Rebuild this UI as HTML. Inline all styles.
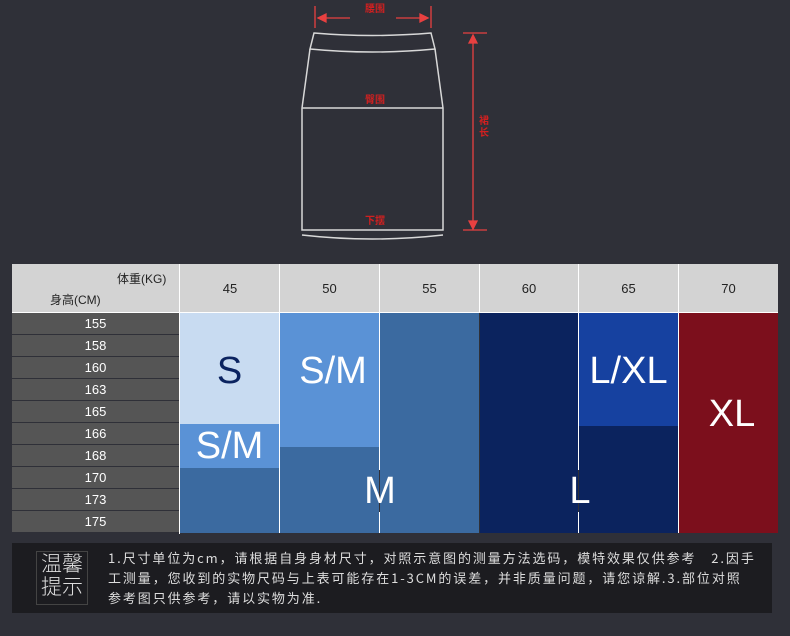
<!DOCTYPE html>
<html><head><meta charset="utf-8"><style>
body{margin:0;width:790px;height:636px;background:#2f3038;position:relative;overflow:hidden;font-family:"Liberation Sans","Noto Sans CJK SC",sans-serif}
.a{position:absolute}
.r{position:absolute;left:12px;width:167px;height:21px;background:#555;color:#fff;font-size:13px;text-align:center;line-height:21px}
.b{position:absolute;color:#fff;font-size:38px;text-align:center}
.t{position:absolute;left:108px;color:#ddd;font-size:13px;letter-spacing:1.9px;white-space:nowrap;font-family:'Noto Sans CJK SC',sans-serif;line-height:20px}
</style></head><body>
<svg class="a" style="left:0;top:0" width="790" height="260">
<g stroke="#d8d8d8" stroke-width="1.5" fill="none">
<path d="M314 33 Q372 38 431 33 L435 49 Q372 55 310 49 Z"/>
<path d="M310 49 L302 108 L302 230 L443 230 L443 108 L435 49"/>
<path d="M302 108 H443"/>
<path d="M302 235 Q372 243 443 235"/>
</g>
<g stroke="#e84040" stroke-width="1.3" fill="#e84040">
<path d="M315 6 V28 M431 6 V28 M318 18 H350 M396 18 H428"/>
<path d="M318 18 l8 -4 v8z M428 18 l-8 -4 v8z"/>
<path d="M463 33 H487 M463 230 H487 M473 36 V227"/>
<path d="M473 35 l-4 8 h8z M473 229 l-4 -8 h8z"/>
</g>
<g fill="#d02020" font-size="10" font-weight="bold" font-family="Noto Sans CJK SC,sans-serif">
<text x="365" y="12">腰围</text><text x="365" y="103">臀围</text><text x="365" y="224">下摆</text>
<text x="479" y="124">裙</text><text x="479" y="136">长</text>
</g>
</svg>
<div class="a" style="left:12px;top:264px;width:766px;height:48px;background:#d3d3d3"></div>
<div class="a" style="left:117px;top:270px;font-size:12px;color:#222">体重(KG)</div>
<div class="a" style="left:50px;top:291px;font-size:12px;color:#222">身高(CM)</div>
<div class="a" style="top:281px;left:180px;width:100px;text-align:center;font-size:13px;color:#222">45</div>
<div class="a" style="top:281px;left:280px;width:99px;text-align:center;font-size:13px;color:#222">50</div>
<div class="a" style="top:281px;left:380px;width:99px;text-align:center;font-size:13px;color:#222">55</div>
<div class="a" style="top:281px;left:480px;width:98px;text-align:center;font-size:13px;color:#222">60</div>
<div class="a" style="top:281px;left:579px;width:99px;text-align:center;font-size:13px;color:#222">65</div>
<div class="a" style="top:281px;left:679px;width:99px;text-align:center;font-size:13px;color:#222">70</div>
<div class="a" style="left:179px;top:264px;width:1px;height:270px;background:#fff"></div>
<div class="a" style="left:279px;top:264px;width:1px;height:48px;background:#fff"></div>
<div class="a" style="left:379px;top:264px;width:1px;height:48px;background:#fff"></div>
<div class="a" style="left:479px;top:264px;width:1px;height:48px;background:#fff"></div>
<div class="a" style="left:578px;top:264px;width:1px;height:48px;background:#fff"></div>
<div class="a" style="left:678px;top:264px;width:1px;height:48px;background:#fff"></div>
<div class="a" style="left:12px;top:312px;width:766px;height:1px;background:#fff"></div>
<div class="r" style="top:313px">155</div><div class="r" style="top:335px">158</div><div class="r" style="top:357px">160</div><div class="r" style="top:379px">163</div><div class="r" style="top:401px">165</div><div class="r" style="top:423px">166</div><div class="r" style="top:445px">168</div><div class="r" style="top:467px">170</div><div class="r" style="top:489px">173</div><div class="r" style="top:511px">175</div>
<div class="a" style="left:180px;top:313px;width:99px;height:111px;background:#c8dbf1"></div>
<div class="a" style="left:180px;top:424px;width:99px;height:44px;background:#5a92d6"></div>
<div class="a" style="left:180px;top:468px;width:99px;height:65px;background:#3b6aa0"></div>
<div class="a" style="left:280px;top:313px;width:99px;height:134px;background:#5a92d6"></div>
<div class="a" style="left:280px;top:447px;width:99px;height:86px;background:#3b6aa0"></div>
<div class="a" style="left:380px;top:313px;width:99px;height:220px;background:#3b6aa0"></div>
<div class="a" style="left:480px;top:313px;width:98px;height:220px;background:#0b235e"></div>
<div class="a" style="left:579px;top:313px;width:99px;height:113px;background:#1641a0"></div>
<div class="a" style="left:579px;top:426px;width:99px;height:107px;background:#0b235e"></div>
<div class="a" style="left:679px;top:313px;width:99px;height:220px;background:#7c0f1c"></div>
<div class="a" style="left:379px;top:313px;width:1px;height:157px;background:#fff"></div>
<div class="a" style="left:379px;top:512px;width:1px;height:21px;background:#fff"></div>
<div class="a" style="left:578px;top:313px;width:1px;height:157px;background:#fff"></div>
<div class="a" style="left:578px;top:512px;width:1px;height:21px;background:#fff"></div>
<div class="a" style="left:678px;top:313px;width:1px;height:220px;background:#fff"></div>
<div class="a" style="left:279px;top:313px;width:1px;height:220px;background:#fff"></div>
<div class="b" style="left:180px;top:350px;width:99px;color:#0b2360">S</div>
<div class="b" style="left:180px;top:425px;width:99px">S/M</div>
<div class="b" style="left:280px;top:350px;width:106px">S/M</div>
<div class="b" style="left:330px;top:470px;width:100px">M</div>
<div class="b" style="left:530px;top:470px;width:100px">L</div>
<div class="b" style="left:579px;top:350px;width:99px">L/XL</div>
<div class="b" style="left:679px;top:393px;width:106px">XL</div>
<div class="a" style="left:12px;top:543px;width:760px;height:70px;background:#1c1c20"></div>
<div class="a" style="left:36px;top:551px;width:50px;height:52px;border:1px solid #444;color:#ddd;font-size:21px;line-height:23px;text-align:center;font-family:'Noto Sans CJK SC',sans-serif;font-weight:300">温馨<br>提示</div>
<div class="t" style="top:548px">1.尺寸单位为cm，请根据自身身材尺寸，对照示意图的测量方法选码，模特效果仅供参考　2.因手</div>
<div class="t" style="top:568px">工测量，您收到的实物尺码与上表可能存在1-3CM的误差，并非质量问题，请您谅解.3.部位对照</div>
<div class="t" style="top:588px">参考图只供参考，请以实物为准.</div>
</body></html>
